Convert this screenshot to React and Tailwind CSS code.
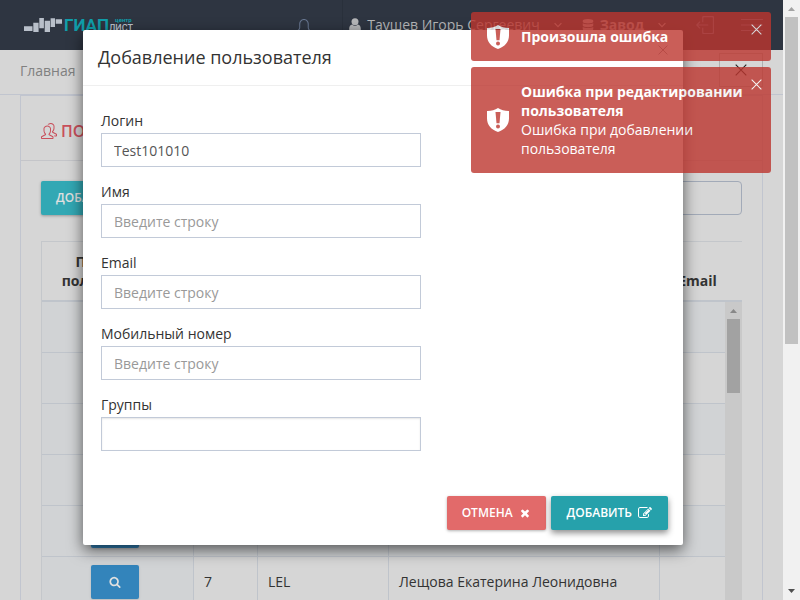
import React from 'react';
import { SlBell, SlPeople, SlLogout } from 'react-icons/sl';
import { FaDatabase } from 'react-icons/fa';

const fieldClass =
  'block h-[34px] w-full border border-[#c2cad8] bg-white px-3 text-sm text-[#555] placeholder-[#999] outline-none';

function Cross({ className }) {
  return (
    <svg viewBox="0 0 12 12" className={className} fill="none" stroke="currentColor" strokeWidth="1.1">
      <path d="M0.7 0.7 11.3 11.3M11.3 0.7 0.7 11.3" />
    </svg>
  );
}

function Chevron() {
  return (
    <svg viewBox="0 0 8 6" className="h-1.5 w-2" fill="none" stroke="currentColor" strokeWidth="1.2">
      <path d="M0.600 1.200 4 4.600 7.400 1.200" />
    </svg>
  );
}

function MenuLines() {
  return (
    <svg viewBox="0 0 22 12" className="h-3 w-[22px]" stroke="currentColor" strokeWidth="1">
      <path d="M0 .5H22M0 6H22M0 11.500H22" />
    </svg>
  );
}

function Times() {
  return (
    <svg viewBox="0 0 1792 1792" className="size-3" fill="currentColor">
      <path d="M1490 1322q0 40-28 68l-136 136q-28 28-68 28t-68-28l-294-294-294 294q-28 28-68 28t-68-28l-136-136q-28-28-28-68t28-68l294-294-294-294q-28-28-28-68t28-68l136-136q28-28 68-28t68 28l294 294 294-294q28-28 68-28t68 28l136 136q28 28 28 68t-28 68l-294 294 294 294q28 28 28 68z" />
    </svg>
  );
}

function Edit() {
  return (
    <svg viewBox="0 0 1792 1792" className="size-3.5" fill="currentColor">
      <path d="M888 1184l116-116-152-152-116 116v56h96v96h56zm440-720q-16-16-33 1l-350 350q-17 17-1 33t33-1l350-350q17-17 1-33zm80 594v190q0 119-84.5 203.5t-203.5 84.5h-832q-119 0-203.5-84.5t-84.5-203.5v-832q0-119 84.5-203.5t203.5-84.5h832q63 0 117 25 15 7 18 23 3 17-9 29l-49 49q-14 14-32 8-23-6-45-6h-832q-66 0-113 47t-47 113v832q0 66 47 113t113 47h832q66 0 113-47t47-113v-126q0-13 9-22l64-64q15-15 35-7t20 29zm-96-738l288 288-672 672h-288v-288zm444 132l-92 92-288-288 92-92q28-28 68-28t68 28l152 152q28 28 28 68t-28 68z" />
    </svg>
  );
}

function Search() {
  return (
    <svg viewBox="0 0 1792 1792" className="size-3" fill="currentColor">
      <path d="M1216 832q0-185-131.5-316.5t-316.5-131.5-316.5 131.5-131.5 316.5 131.5 316.5 316.5 131.5 316.5-131.5 131.5-316.5zm512 832q0 52-38 90t-90 38q-54 0-90-38l-343-342q-179 124-399 124-143 0-273.5-55.5t-225-150-150-225-55.5-273.5 55.5-273.5 150-225 225-150 273.5-55.5 273.5 55.5 225 150 150 225 55.5 273.5q0 220-124 399l343 343q37 37 37 90z" />
    </svg>
  );
}

function Shield() {
  return (
    <svg viewBox="0 0 22 24" className="-my-1 h-6 w-[22px] shrink-0" fill="none">
      <path fill="#fff" d="M11 0C8 1.9 4 3.1 0 3v7.5C0 17 4.2 21.600 11 24c6.800-2.400 11-7 11-13.500V3C18 3.100 14 1.900 11 0Z" />
      <path fill="#bd362f" d="M8.500 4h5l-1 11.300h-3Z" />
      <circle cx="11" cy="18.600" r="2" fill="#bd362f" />
    </svg>
  );
}

function UserGlyph() {
  return (
    <svg viewBox="0 0 12 14" className="h-3.5 w-3" fill="currentColor">
      <circle cx="6" cy="3.700" r="3.500" />
      <path d="M3.200 6.400C1 6.600.2 8.700.2 11.200.2 12.900 1.200 14 2.800 14h6.400c1.600 0 2.600-1.100 2.600-2.800 0-2.500-.8-4.600-3-4.800C8 7.200 7 7.700 6 7.700s-2-.5-2.800-1.300Z" />
    </svg>
  );
}

function Logo() {
  return (
    <svg viewBox="0 0 112 18" className="h-[18px] w-28">
      <g fill="#b9c0ca">
        <path d="M0 10.300h8.500v4.700H0ZM9.300 6.700h5.300V16H9.300ZM15.300 2h4.600v10.300h-4.600ZM20.700 4.700H26V16h-5.300ZM26.600 2.300H31V11h-4.400ZM31.700 3.300H38v4.500h-6.300Z" />
      </g>
      <text x="40" y="15" fontFamily="Roboto, sans-serif" fontWeight="700" fontSize="17" fill="#109eaa">ГИАП</text>
      <text x="91" y="6" fontFamily="Roboto, sans-serif" fontWeight="700" fontSize="6" fill="#109eaa">центр</text>
      <text x="85" y="15" fontFamily="Roboto, sans-serif" fontWeight="500" fontSize="9" fill="#b9c0ca">ЛИСТ</text>
    </svg>
  );
}

function Header() {
  return (
    <header className="flex h-[50px] items-center bg-[#2e3541] pl-6 pr-5 text-sm text-[#b5b6b8]">
      <a href="#home" aria-label="ГИАП центр лист"><Logo /></a>
      <div className="ml-auto flex h-full items-center">
        <button aria-label="Уведомления" className="mr-[30px] pt-1 text-[#66758f]"><SlBell className="size-4" /></button>
        <button className="flex h-full items-center gap-1.5 border-l border-[#29303b] pl-1.5">
          <UserGlyph />
          <span className="whitespace-nowrap">Таушев Игорь Сергеевич</span>
          <span className="pl-2"><Chevron /></span>
        </button>
        <button className="ml-5 flex items-center gap-1.5 font-bold">
          <FaDatabase className="size-3" />
          Завод
          <span className="pl-2"><Chevron /></span>
        </button>
        <button aria-label="Выйти" className="ml-[30px] text-[#66758f]"><SlLogout className="size-[18px]" /></button>
        <button aria-label="Меню" className="ml-[27px] text-[#66758f]"><MenuLines /></button>
      </div>
    </header>
  );
}

const rows = [
  ['2', 'ADM', 'Администратор'],
  ['3', 'TIS', 'Таушев Игорь Сергеевич'],
  ['4', 'OPR', 'Оператор'],
  ['5', 'TST', 'Тестовый пользователь'],
  ['6', 'KAA', 'Инженер'],
  ['7', 'LEL', 'Лещова Екатерина Леонидовна'],
];

function UsersTable() {
  return (
    <div className="mt-[26px] border-l border-t border-[#c4c7cb]">
      <div className="flex">
        <table className="w-full table-fixed border-separate border-spacing-0 text-sm text-[#333]">
          <colgroup>
            <col className="w-[152px]" />
            <col className="w-16" />
            <col className="w-[131px]" />
            <col className="w-[271px]" />
            <col />
          </colgroup>
          <thead>
            <tr className="h-[60px] align-bottom leading-[19px]">
              <th className="border-b-2 border-[#bfc4cb] px-2 pb-2.5">Параметры пользователей</th>
              <th className="border-b-2 border-[#bfc4cb] pb-2.5">ID</th>
              <th className="border-b-2 border-[#bfc4cb] pb-2.5">Логин</th>
              <th className="border-b-2 border-[#bfc4cb] pb-2.5">Имя</th>
              <th className="border-b-2 border-[#bfc4cb] pb-2.5 pl-2.5">Email</th>
            </tr>
          </thead>
          <tbody>
            {rows.map(([id, login, name], i) => (
              <tr key={id} className={i % 2 ? 'h-[51px] bg-[#d6d6d6]' : 'h-[51px] bg-[#d1d3d5]'}>
                <td className="border-b border-r border-[#bfc4cb] bg-[#d1d3d5] pr-1.5 text-center">
                  <button aria-label="Просмотр" className="inline-flex h-[34px] w-12 items-center justify-center rounded-xs bg-[#3384bb] align-middle text-[#e0e0e0] shadow-sm">
                    <Search />
                  </button>
                </td>
                <td className="border-b border-r border-[#bfc4cb] px-2.5">{id}</td>
                <td className="border-b border-r border-[#bfc4cb] px-2.5">{login}</td>
                <td className="whitespace-nowrap border-b border-r border-[#bfc4cb] px-2.5">{name}</td>
                <td className="border-b border-[#bfc4cb]" />
              </tr>
            ))}
          </tbody>
        </table>
        <div className="flex w-[17px] shrink-0 flex-col">
          <div className="h-[60px] border-b-2 border-[#bfc4cb]" />
          <div className="flex flex-1 flex-col items-center bg-[#c9c9c9]">
            <svg viewBox="0 0 17 17" className="size-[17px]" fill="#888"><path d="M5 11h7L8.500 7Z" /></svg>
            <div className="h-[74px] w-[13px] bg-[#a2a2a2]" />
          </div>
        </div>
      </div>
    </div>
  );
}

function Field({ id, label, value, placeholder, inner }) {
  return (
    <div>
      <label htmlFor={id} className="mb-0.5 block text-sm leading-5 text-[#333]">{label}</label>
      <input id={id} defaultValue={value} placeholder={placeholder} className={inner ? fieldClass + ' shadow-[inset_0_1px_2px_rgba(0,0,0,0.1)]' : fieldClass} />
    </div>
  );
}

function Modal() {
  return (
    <div role="dialog" aria-label="Добавление пользователя" className="w-[600px] rounded-xs bg-white text-[#333] shadow-[0_5px_15px_rgba(0,0,0,0.6)]">
      <div className="flex h-14 items-center justify-between border-b border-[#efefef] px-[15px]">
        <h2 className="pb-0.5 text-lg">Добавление пользователя</h2>
        <button aria-label="Закрыть" className="mb-4 text-[#999]"><Cross className="size-2.5" /></button>
      </div>
      <form className="px-[15px] pb-[15px] pt-[25px]">
        <div className="flex w-[323px] flex-col gap-[15px] pl-[3px]">
          <Field id="login" label="Логин" value="Test101010" />
          <Field id="name" label="Имя" placeholder="Введите строку" />
          <Field id="email" label="Email" placeholder="Введите строку" />
          <Field id="phone" label="Мобильный номер" placeholder="Введите строку" />
          <Field id="groups" label="Группы" inner />
        </div>
        <div className="mt-[45px] flex justify-end gap-[5px] text-xs font-semibold text-white">
          <button type="button" className="flex h-[34px] items-center gap-1.5 rounded-xs bg-[#e26a6a] px-[15px] shadow-[0_1px_3px_rgba(0,0,0,0.3)]">
            ОТМЕНА <Times />
          </button>
          <button type="submit" className="flex h-[34px] items-center gap-1.5 rounded-xs bg-[#26a1ab] px-4 shadow-[0_3px_6px_rgba(0,0,0,0.45)]">
            ДОБАВИТЬ <Edit />
          </button>
        </div>
      </form>
    </div>
  );
}

function Toast({ title, text }) {
  return (
    <div role="alert" className="relative flex w-[300px] items-center gap-3 rounded-[3px] bg-[#bd362f] py-[15px] pl-4 pr-[15px] text-sm leading-[19px] text-white opacity-80">
      <Shield />
      <div>
        <strong className="block font-bold">{title}</strong>
        {text && <p className="pr-5">{text}</p>}
      </div>
      <button aria-label="Закрыть" className="absolute right-[9px] top-3"><Cross className="size-[11px]" /></button>
    </div>
  );
}

export default function App() {
  return (
    <div className="relative flex h-screen overflow-hidden bg-[#d6d6d6] font-['Open_Sans',sans-serif]">
      <div className="min-w-0 flex-1">
        <Header />
        <nav className="flex h-[45px] items-center justify-between border-b border-[#c1c5cf] pl-5 pr-5 text-sm text-[#808080]">
          <a href="#main" className="pb-0.5">Главная</a>
          <button aria-label="Закрыть вкладку" className="mb-1 flex h-[34px] w-11 items-center justify-center border border-[#b0b0b0] text-[#222]">
            <Cross className="size-3" />
          </button>
        </nav>
        <main className="ml-5 mr-5 border-x border-t border-[#c1c5cf]">
          <div className="flex h-[65px] items-center gap-1 border-b border-[#c4c5c9] px-5 pt-1.5 text-[#c94f5b]">
            <SlPeople className="size-4" />
            <h1 className="text-base font-semibold">ПОЛЬЗОВАТЕЛИ</h1>
          </div>
          <div className="px-5 pt-5">
            <div className="flex justify-between">
              <button className="h-[34px] rounded-xs bg-[#32a8b4] px-[15px] text-xs font-semibold text-[#e0e0e0] shadow-[0_1px_3px_rgba(0,0,0,0.3)]">ДОБАВИТЬ</button>
              <input aria-label="Поиск" className="h-[34px] w-60 rounded border border-[#a2aab8] bg-transparent px-3 text-sm" />
            </div>
            <UsersTable />
          </div>
        </main>
      </div>
      <div className="flex w-[17px] shrink-0 flex-col items-center bg-[#f1f1f1]">
        <svg viewBox="0 0 17 17" className="size-[17px]" fill="#a3a3a3"><path d="M5 11h7L8.500 7Z" /></svg>
        <div className="h-[327px] w-[13px] bg-[#c1c1c1]" />
        <svg viewBox="0 0 17 17" className="mt-auto size-[17px]" fill="#505050"><path d="M5 6h7L8.500 10Z" /></svg>
      </div>
      <div className="absolute inset-0 flex items-start justify-center pr-[34px] pt-[30px]">
        <Modal />
      </div>
      <div className="absolute right-[29px] top-3 flex flex-col gap-1.5">
        <Toast title="Произошла ошибка" />
        <Toast title="Ошибка при редактировании пользователя" text="Ошибка при добавлении пользователя" />
      </div>
    </div>
  );
}
